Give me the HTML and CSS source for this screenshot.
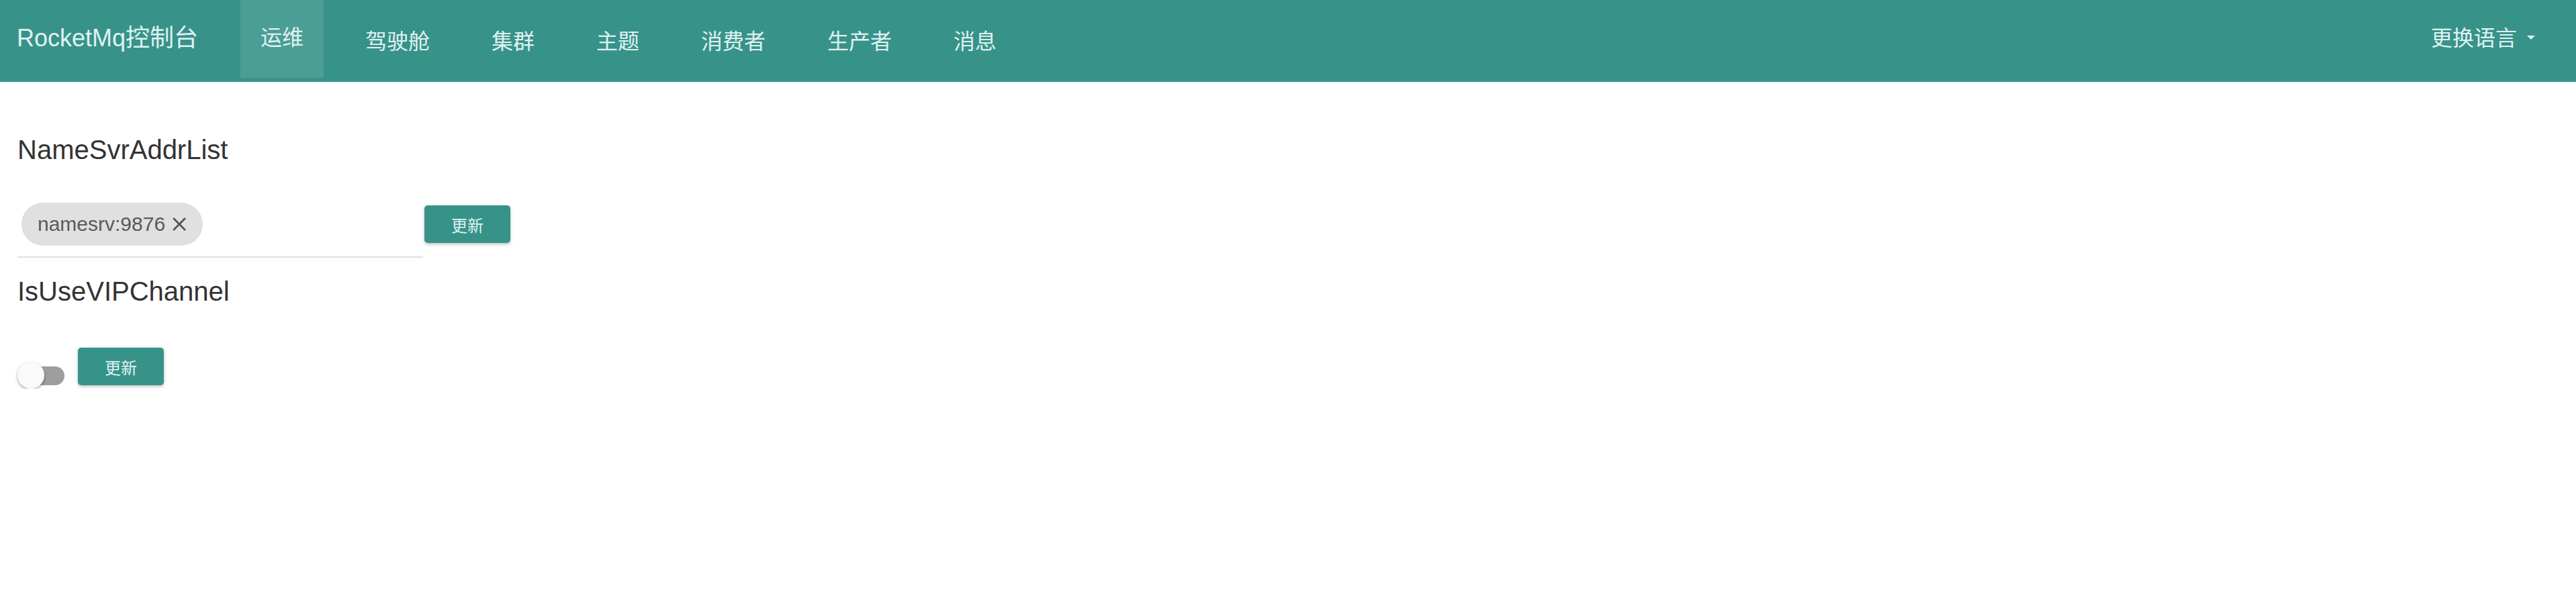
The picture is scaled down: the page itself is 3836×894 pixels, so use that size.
FILE: index.html
```html
<!DOCTYPE html>
<html lang="zh-CN">
<head>
<meta charset="utf-8">
<title>RocketMq控制台</title>
<link rel="stylesheet" href="styles.css">
</head>
<body>
<nav class="navbar">
  <div class="brand">RocketMq控制台</div>
  <ul class="nav">
    <li class="nav-item active"><a class="nav-link">运维</a></li>
    <li class="nav-item"><a class="nav-link">驾驶舱</a></li>
    <li class="nav-item"><a class="nav-link">集群</a></li>
    <li class="nav-item"><a class="nav-link">主题</a></li>
    <li class="nav-item"><a class="nav-link">消费者</a></li>
    <li class="nav-item"><a class="nav-link">生产者</a></li>
    <li class="nav-item"><a class="nav-link">消息</a></li>
  </ul>
  <div class="lang">更换语言<span class="caret"></span></div>
</nav>
<main class="content">
  <section class="field">
    <h2 class="field-title">NameSvrAddrList</h2>
    <div class="row">
      <div class="chips">
        <span class="chip">namesrv:9876<svg class="chip-remove" viewBox="0 0 24 24" width="34" height="34"><path d="M19 6.41L17.59 5 12 10.59 6.41 5 5 6.41 10.59 12 5 17.59 6.41 19 12 13.41 17.59 19 19 17.59 13.41 12z"/></svg></span>
      </div>
      <button class="btn btn-chips">更新</button>
    </div>
  </section>
  <section class="field">
    <h2 class="field-title title-second">IsUseVIPChannel</h2>
    <div class="row row-toggle">
      <span class="switch"><span class="switch-track"></span><span class="switch-knob"></span></span>
      <button class="btn btn-toggle">更新</button>
    </div>
  </section>
</main>
</body>
</html>
```
FILE: styles.css
```css
html, body {
  margin: 0;
  padding: 0;
  background: #ffffff;
  font-family: "Liberation Sans", "Noto Sans CJK SC", sans-serif;
}

.navbar {
  display: flex;
  align-items: flex-start;
  height: 122px;
  background: #37938a;
  color: #e0f2f1;
  padding-left: 25px;
  padding-right: 61px;
  box-sizing: border-box;
}

.brand {
  width: 317px;
  flex-shrink: 0;
  padding-top: 2px;
  font-size: 36px;
  line-height: 110px;
  white-space: nowrap;
}

.nav {
  display: flex;
  list-style: none;
  margin: 0;
  padding: 0;
}

.nav-item {
  margin: 0 16px;
}

.nav-link {
  display: block;
  height: 116px;
  line-height: 108px;
  padding: 8px 30px 0 30px;
  font-size: 32px;
  box-sizing: border-box;
}

.nav-item.active .nav-link {
  padding-top: 2px;
  background: rgba(255, 255, 255, 0.1);
}

.lang {
  margin-left: auto;
  display: flex;
  align-items: center;
  height: 108px;
  font-size: 32px;
}

.caret {
  display: inline-block;
  width: 0;
  height: 0;
  margin-left: 15px;
  margin-top: 4px;
  border-top: 6px solid #e0f2f1;
  border-left: 6.5px solid transparent;
  border-right: 6.5px solid transparent;
}

.content {
  padding-left: 26px;
}

.field-title {
  margin: 77px 0 0 0;
  font-size: 40px;
  line-height: 48px;
  font-weight: normal;
  color: #333333;
}

.title-second {
  margin-top: 26px;
}

.row {
  display: flex;
  align-items: flex-start;
  margin-top: 55px;
}

.chips {
  width: 604px;
  padding: 0 0 16px 6px;
  box-sizing: border-box;
  border-bottom: 2px solid #e0e0e0;
}

.chip {
  display: inline-flex;
  align-items: center;
  height: 64px;
  padding: 0 18px 0 24px;
  border-radius: 32px;
  background: #e0e0e0;
  color: #5a5a5a;
  font-size: 30px;
}

.chip-remove {
  margin-left: 4px;
  fill: #555555;
}

.btn {
  width: 128px;
  height: 56px;
  border: none;
  border-radius: 5px;
  background: #37938a;
  color: #e0f2f1;
  font-family: "Liberation Sans", "Noto Sans CJK SC", sans-serif;
  font-size: 24px;
  padding: 0;
  box-shadow: 0 2px 5px rgba(0, 0, 0, 0.26);
}

.btn-chips {
  margin-left: 2px;
  margin-top: 4px;
}

.row-toggle {
  margin-top: 60px;
}

.switch {
  position: relative;
  display: block;
  width: 70px;
  height: 40px;
  margin-top: 21px;
}

.switch-track {
  position: absolute;
  left: 2px;
  top: 7px;
  width: 68px;
  height: 28px;
  border-radius: 14px;
  background: #9e9e9e;
}

.switch-knob {
  position: absolute;
  left: 0;
  top: 0;
  width: 40px;
  height: 40px;
  border-radius: 50%;
  background: #fafafa;
  box-shadow: 0 2px 4px rgba(0, 0, 0, 0.35);
}

.btn-toggle {
  margin-left: 20px;
}
```
